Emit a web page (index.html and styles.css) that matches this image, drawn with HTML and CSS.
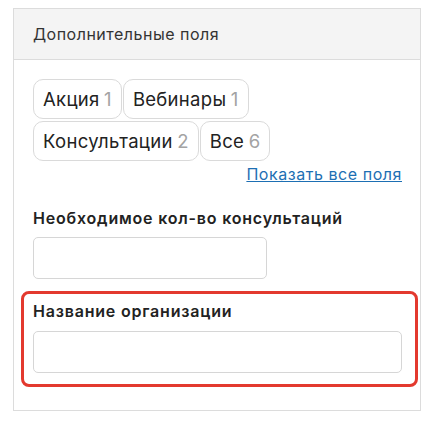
FILE: index.html
```html
<!DOCTYPE html>
<html lang="ru">
<head>
<meta charset="utf-8">
<link rel="stylesheet" href="styles.css">
</head>
<body>
<div class="card">
  <div class="card-header">Дополнительные поля</div>
  <div class="card-body">
    <div class="chips">
      <span class="chip">Акция <span class="count">1</span></span>
      <span class="chip">Вебинары <span class="count">1</span></span>
      <span class="chip">Консультации <span class="count">2</span></span>
      <span class="chip">Все <span class="count">6</span></span>
    </div>
    <div class="more"><a href="#" class="more-link">Показать все поля</a></div>
    <div class="field">
      <label class="field-label">Необходимое кол-во консультаций</label>
      <input class="input input-short" type="text">
    </div>
    <div class="field field-highlight">
      <label class="field-label">Название организации</label>
      <input class="input" type="text">
    </div>
  </div>
</div>
</body>
</html>
```

FILE: styles.css
```css
* { box-sizing: border-box; }
body {
  margin: 0;
  background: #fff;
  font-family: Inter, "Noto Sans", sans-serif;
  color: #222;
}
.card {
  margin: 8px 0 0 13px;
  width: 408px;
  border: 1px solid #dcdcdc;
}
.card-header {
  height: 51px;
  background: #f4f4f4;
  border-bottom: 1px solid #dcdcdc;
  padding: 14px 0 0 19px;
  font-size: 16px;
  line-height: 22px;
  letter-spacing: 0.5px;
  color: #333;
}
.card-body {
  padding: 19px 18px 23px 19px;
}
.chips {
  display: flex;
  flex-wrap: wrap;
  gap: 2px 1px;
  width: 260px;
}
.chip {
  display: inline-flex;
  align-items: center;
  height: 40px;
  padding: 0 9px 0 9px;
  border: 1px solid #dadada;
  border-radius: 10px;
  font-size: 18.5px;
  letter-spacing: 0.3px;
  word-spacing: -1px;
  color: #222;
  white-space: pre;
}
.count { color: #a3a3a3; }
.more {
  text-align: right;
  margin-top: 2px;
  line-height: 22px;
}
.more-link {
  font-size: 16px;
  letter-spacing: 0.55px;
  color: #1d6fb3;
  text-decoration: underline;
}
.field {
  display: flex;
  flex-direction: column;
}
.more + .field { margin-top: 22px; }
.field-label {
  font-size: 16px;
  line-height: 22px;
  font-weight: 600;
  letter-spacing: 0.8px;
  color: #222;
}
.input {
  margin-top: 8px;
  height: 42px;
  border: 1px solid #d6d6d6;
  border-radius: 5px;
  background: #fff;
  font: inherit;
}
.input-short { width: 234px; }
.field-highlight {
  margin: 12px -16px 0 -12px;
  padding: 6px 13px 11px 9px;
  border: 3px solid #e3392e;
  border-radius: 8px;
}
.field-highlight .input { margin-top: 9px; }
```
